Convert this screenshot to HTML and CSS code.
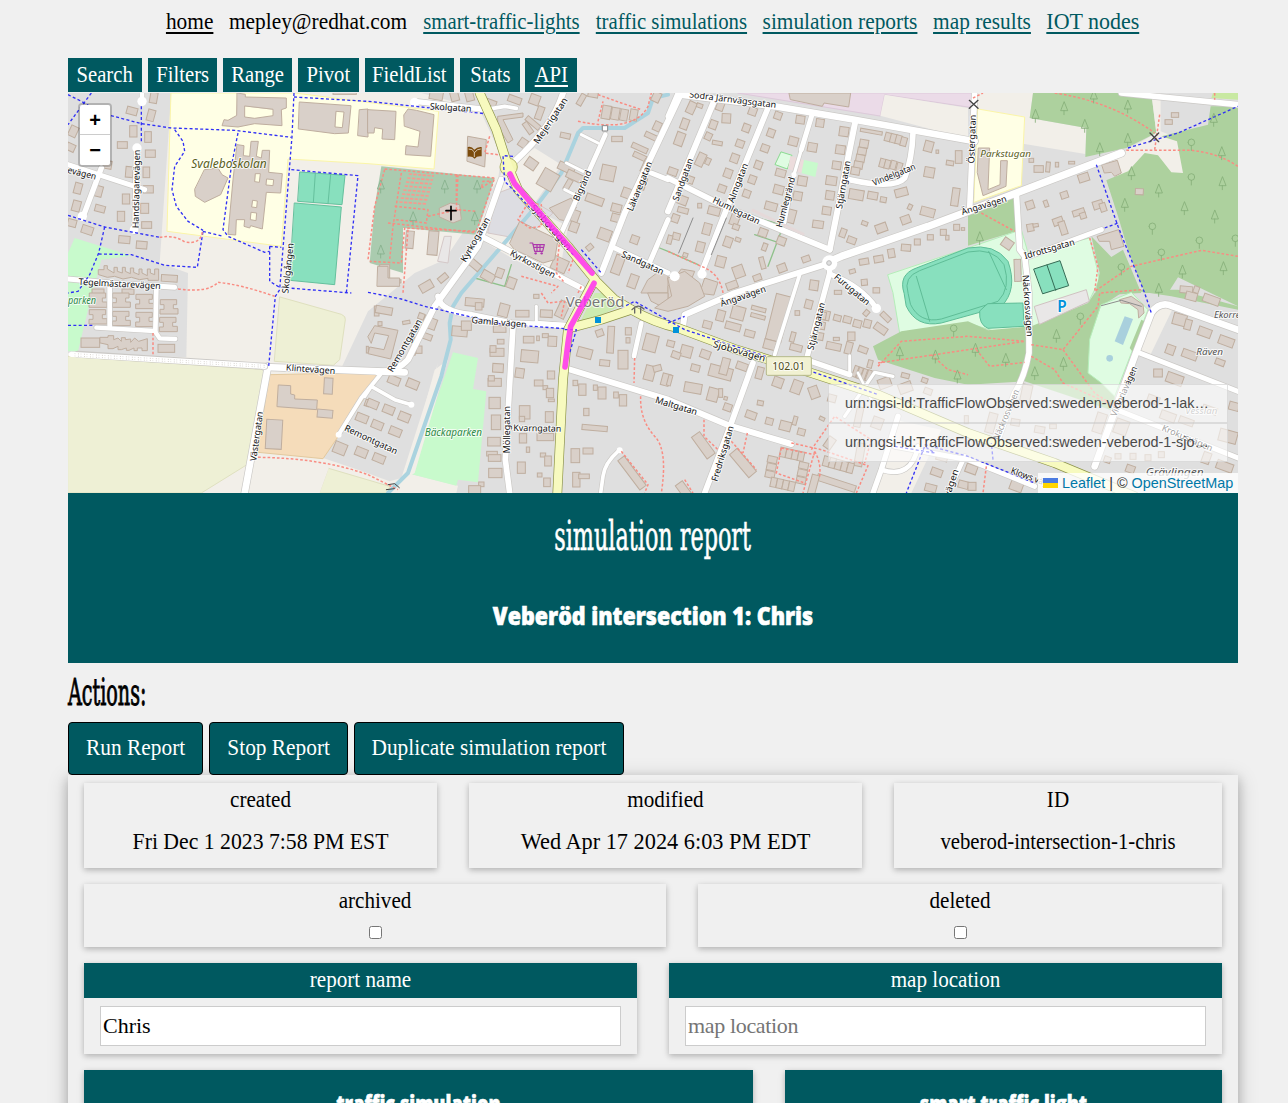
FILE: index.html
```html
<!DOCTYPE html>
<html lang="en">
<head>
<meta charset="utf-8">
<title>simulation report</title>
<link rel="stylesheet" href="styles.css">
</head>
<body>
<nav class="site-nav">
  <a class="home" href="#"><span>home</span></a>
  <b class="user"><span>mepley@redhat.com</span></b>
  <a class="lights" href="#"><span>smart-traffic-lights</span></a>
  <a class="sims" href="#"><span>traffic simulations</span></a>
  <a class="reports" href="#"><span>simulation reports</span></a>
  <a class="results" href="#"><span>map results</span></a>
  <a class="iot" href="#"><span>IOT nodes</span></a>
</nav>
<main class="page">
  <div class="tabs">
    <div class="t-search"><span>Search</span></div>
    <div class="t-filters"><span>Filters</span></div>
    <div class="t-range"><span>Range</span></div>
    <div class="t-pivot"><span>Pivot</span></div>
    <div class="t-fields"><span>FieldList</span></div>
    <div class="t-stats"><span>Stats</span></div>
    <div class="t-api"><span>API</span></div>
  </div>
  <section class="map">
    <svg id="map" class="map-canvas" viewBox="0 0 3510 1200" width="1170" height="400"></svg>
    <div class="zoom-control"><a>+</a><a>−</a></div>
    <div class="legend">
      <p>urn:ngsi-ld:TrafficFlowObserved:sweden-veberod-1-lakaregatan</p>
      <p>urn:ngsi-ld:TrafficFlowObserved:sweden-veberod-1-sjobovagen</p>
    </div>
    <div class="attribution">
      <svg width="15" height="10" viewBox="0 0 15 10"><path fill="#4c7be1" d="M0 0h15v5H0z"/><path fill="#ffd500" d="M0 5h15v5H0z"/></svg>
      <a href="#">Leaflet</a> | © <a href="#">OpenStreetMap</a>
    </div>
  </section>
  <header class="banner">
    <h1><span>simulation report</span></h1>
    <h2><span>Veberöd intersection 1: Chris</span></h2>
  </header>
  <h3 class="actions-title"><span>Actions:</span></h3>
  <div class="actions">
    <button class="b-run"><span>Run Report</span></button>
    <button class="b-stop"><span>Stop Report</span></button>
    <button class="b-dup"><span>Duplicate simulation report</span></button>
  </div>
  <section class="form">
    <div class="row row-dates">
      <div class="card info"><label>created</label><p>Fri Dec 1 2023 7:58 PM EST</p></div>
      <div class="card info modified"><label>modified</label><p>Wed Apr 17 2024 6:03 PM EDT</p></div>
      <div class="card info ident"><label>ID</label><p>veberod-intersection-1-chris</p></div>
    </div>
    <div class="row row-flags">
      <div class="card flag"><label>archived</label><input type="checkbox"></div>
      <div class="card flag"><label>deleted</label><input type="checkbox"></div>
    </div>
    <div class="row row-names">
      <div class="card field"><label>report name</label><input type="text" value="Chris"></div>
      <div class="card field"><label>map location</label><input type="text" placeholder="map location"></div>
    </div>
    <div class="row row-links">
      <div class="card link"><h4>traffic simulation</h4></div>
      <div class="card link"><h4>smart traffic light</h4></div>
    </div>
  </section>
</main>
<script src="map.js"></script>
</body>
</html>
```
FILE: styles.css
```css
* { box-sizing: border-box; }
html { height: 1103px; overflow: hidden; }
body {
  margin: 0; height: 1103px; overflow: hidden;
  background: #f0f0f0; color: #000;
  font: 24px/34px "Liberation Serif", serif;
}
p, h1, h2, h3, h4 { margin: 0; font-weight: 400; }

.site-nav {
  display: flex; justify-content: center; gap: 16px;
  margin: 0 50px 0 68px; padding-top: 4px; height: 58px;
}
.site-nav > * { display: flex; justify-content: center; height: 34px; font-weight: 400; white-space: nowrap; color: #005960; }
.site-nav span, .tabs span, .actions span {
  display: block; flex: none; transform: scaleX(.89); white-space: nowrap;
}
.site-nav a { text-decoration: underline; text-decoration-thickness: 2px; text-underline-offset: 3px; }
.site-nav .home { width: 47px; color: #000; }
.site-nav .user { width: 178px; color: #000; }
.site-nav .lights { width: 157px; }
.site-nav .sims { width: 151px; }
.site-nav .lights span, .site-nav .sims span { transform: scaleX(.865); }
.site-nav .reports { width: 154px; }
.site-nav .results { width: 97px; }
.site-nav .iot { width: 94px; }
.site-nav .iot span { transform: scaleX(.915); }

.page { width: 1170px; margin-left: 68px; }
.tabs { display: flex; gap: 6px; height: 35px; line-height: 32px; }
.tabs span { transform: scaleX(.86); }
.tabs div { display: flex; justify-content: center; height: 34px; background: #005960; color: #fff; }
.t-search { width: 74px; }
.t-filters, .t-range { width: 69px; }
.t-pivot { width: 61px; }
.t-fields { width: 89px; }
.t-stats { width: 60px; }
.t-api { width: 52px; margin-left: -1px; text-decoration: underline; text-decoration-thickness: 2px; text-underline-offset: 3px; }

.map { position: relative; height: 400px; overflow: hidden; background: #f2efe9; font-family: "Liberation Sans", Arial, sans-serif; }
.map-canvas { display: block; }
.map-canvas text { font-family: "Noto Sans", sans-serif; text-anchor: middle; fill: #111; stroke: #fff; stroke-width: 6px; stroke-opacity: .75; paint-order: stroke; stroke-linejoin: round; }
.map-canvas .place { font-style: italic; }
.zoom-control {
  position: absolute; left: 10px; top: 10px; width: 34px;
  border: 2px solid rgba(0,0,0,.2); border-radius: 4px; background-clip: padding-box;
}
.zoom-control a { display: block; height: 30px; background: #fff; text-align: center; font: bold 20px/31px "Liberation Sans", sans-serif; }
.zoom-control a:first-child { border-bottom: 1px solid #ccc; border-radius: 2px 2px 0 0; }
.zoom-control a:last-child { border-radius: 0 0 2px 2px; }
.legend { position: absolute; left: 760px; top: 291px; width: 400px; }
.legend p {
  height: 39px; padding: 0 16px; border: 1px solid rgba(200,200,200,.55);
  background: rgba(255,255,255,.58); color: #4a4a4a; font-size: 14.4px; line-height: 36px;
  white-space: nowrap; overflow: hidden; text-overflow: ellipsis;
}
.attribution {
  position: absolute; right: 0; bottom: 0; height: 20px; width: 200px; padding-left: 5px;
  background: rgba(255,255,255,.8); font-size: 14.4px; line-height: 20px; white-space: nowrap; color: #333;
}
.attribution a { color: #0078a8; text-decoration: none; }

.banner { height: 170px; padding-top: 20px; background: #005960; color: #fff; text-align: center; }
.banner span, .actions-title span { display: inline-block; white-space: nowrap; }
h1 { height: 80px; font: 41px/46px "DejaVu Serif Condensed", "DejaVu Serif", serif; -webkit-text-stroke: .6px #fff; }
h1 span { transform: scaleX(.605); }
h2 { font: 800 24px/46px "Open Sans", sans-serif; -webkit-text-stroke: .6px #fff; }
h2 span { transform: scaleX(.895); }
.actions-title { height: 59px; padding-top: 7px; font: 37px/46px "DejaVu Serif Condensed", "DejaVu Serif", serif; -webkit-text-stroke: .9px #000; }
.actions-title span { transform: scaleX(.575); transform-origin: left; }

.actions { display: flex; gap: 6px; }
.actions button {
  display: flex; justify-content: center; align-items: center; height: 53px; padding: 0 0 3px;
  border: 1px solid #000; border-radius: 4px; background: #005960; color: #fff;
  font: 24px/34px "Liberation Serif", serif;
}
.b-run { width: 135px; }
.b-stop { width: 139px; }
.b-dup { width: 270px; }

.form { height: 600px; padding: 8px 16px; box-shadow: 0 4px 10px rgba(0,0,0,.2), 0 4px 20px rgba(0,0,0,.19); }
.row { display: grid; gap: 32px; margin-bottom: 16px; }
.row-dates { grid-template-columns: 353px 393px 328px; }
.row-flags { grid-template-columns: 582px 524px; }
.row-names { grid-template-columns: 553px 553px; }
.row-links { grid-template-columns: 669px 437px; }
.card { box-shadow: 0 2px 5px rgba(0,0,0,.16), 0 2px 8px rgba(0,0,0,.12); text-align: center; }
.card label { display: block; height: 34px; line-height: 32px; transform: scaleX(.88); }
.info { height: 85px; }
.info p { margin-top: 7px; transform: scaleX(.905); white-space: nowrap; }
.modified p { transform: scaleX(.93); }
.ident p { transform: scaleX(.865); }
.flag { height: 63px; }
.flag input { display: block; width: 13px; height: 13px; margin: 8px auto 0; }
.field { height: 91px; background: linear-gradient(#005960 35px, #f0f0f0 35px); }
.field label { height: 35px; line-height: 33px; color: #fff; }
.field input {
  display: block; width: 521px; height: 40px; margin: 8px 16px; padding: 0 2px 1px; border: 1px solid #ccc;
  background: #fff; color: #000; font: 22px "Liberation Serif", serif;
}
.field input::placeholder { color: #757575; letter-spacing: -.35px; }
.link { height: 100px; background: #005960; color: #fff; }
h4 { padding-top: 16px; font: 800 23px/34px "Open Sans", sans-serif; transform: scaleX(.79); -webkit-text-stroke: .6px #fff; }
```
FILE: map.js
```js
// Town map, drawn at three units per pixel. Tiles are 900 x 600 units.
const out = [];
const path = (d, fill, stroke = 'none', w = 0, extra = '') =>
  out.push(`<path d="${d}" fill="${fill}" stroke="${stroke}" stroke-width="${w}" stroke-linejoin="round" ${extra.includes('dasharray') ? '' : 'stroke-linecap="round"'} ${extra}/>`);
const tile = (x, y, draw) => { out.push(`<g transform="translate(${x} ${y})">`); draw(); out.push('</g>'); };

// Land use
const land = [
  ['#dfdfdf', 'M0,0H310L275,510 360,540 355,793 0,780z'],
  ['#dfdfdf', 'M1060,0H3510V1200H1165L1170,1178 1028,1143 1110,810 1000,1155 965,1165 870,1130 765,1095 900,900V845L820,825 900,655 1040,540 1130,500 1290,260 1300,190 1240,60 1170,30z'],
  ['#f2efe9', 'M1300,240L1400,165 1480,215 1390,345 1500,400 1470,560 1340,500 1220,430z'],
  ['#ffffe5', 'M310,0H680L1112,55 1098,228 900,212 660,198 640,460 298,415z', '#fbf5a8'],
  ['#c8facc', 'M20,435L190,488 100,500 60,650 30,775H0V480z'],
  ['#eef0d5', 'M0,790L590,830 570,1080 545,1110 400,1200H0z', '#dfe0bf'],
  ['#eef0d5', 'M636,612L820,664Q834,670 832,680L815,800 796,817 620,805z', '#dfe0bf'],
  ['#eef0d5', 'M782,1126L965,1180 960,1200H755z', '#dfe0bf'],
  ['#f2efe9', 'M430,1200L545,1110 575,1080 765,1097 782,1126 755,1200z'],
  ['#f5dcba', 'M605,845L940,838 900,900 765,1097 570,1078z', '#e3c99e'],
  ['#aacbaf', 'M940,220L1280,255 1225,425 1005,405V540L905,510 920,340z'],
  ['#88e0be', 'M696,237L831,247 822,335 690,325z', '#65c09d'],
  ['none', 'M742,240L736,329M788,244L780,332', '#65c09d'],
  ['#88e0be', 'M680,330L820,342 800,575 665,562z', '#65c09d'],
  ['#c8facc', 'M1155,778L1230,795 1215,888 1255,895 1230,1168 1170,1160 1165,1178 1028,1143z'],
  ['#cdebb0', 'M1530,700L1580,600 1620,600 1655,640z'],
  ['#ebdbe8', 'M2010,0H2720V45L2450,5 2437,68z', '#ddc9da'],
  ['#d9d0c9', 'M2164,0H2348L2342,42 2268,30 2263,40 2168,20z', '#bfae9f'],
  ['#f2efe9', 'M2450,5L2700,45V138L2437,68z'],
  ['#f2efe9', 'M2720,0H2895L2885,75 3055,105 3052,183 2865,152 2725,50z'],
  ['#ffffe5', 'M2730,48L2870,72 2860,278 2718,328z', '#fbf5a8'],
  ['#add19e', 'M2895,0H3250L3265,120 3175,165 3052,192 3055,105 2885,75z'],
  ['#f2efe9', 'M3250,0H3278V115L3330,135 3350,240 3270,260 3200,300 3140,250 3100,215 3265,120z'],
  ['#add19e', 'M3115,262L3180,235 3230,180 3270,187 3310,238 3345,240 3327,145 3280,130 3420,95 3428,40H3510V640L3330,553 3300,600 3230,600 3180,470 3150,370z'],
  ['#c8e9a2', 'M3435,0H3510V20L3430,15z'],
  ['#add19e', 'M2700,360L2840,315 2862,410 2700,458z'],
  ['#dffce2', 'M2460,545L2700,465 2860,410 2880,480 3065,435 3095,560 3065,620 2910,700 2780,715 2700,690 2495,720 2475,600z', '#b5eeb9'],
  ['#add19e', 'M3070,430L3130,492 3165,470 3220,600 3080,608 3095,540z'],
  ['#add19e', 'M2415,760L2500,715 2700,685 2760,712 2890,700 3060,630 3080,600H3160L3100,640 3065,740 3060,840 3140,890V955L2870,865 2700,875 2600,855 2430,800z'],
  ['#add19e', 'M3180,590H3330L3510,640V650L3310,610z'],
  ['#dffce2', 'M3100,635L3190,598 3240,650 3140,910 3100,870 3060,840 3065,740z', '#b5eeb9'],
  ['#add19e', 'M3185,765L3220,680 3240,690 3195,778z'],
  ['#f2efe9', 'M3260,640L3315,645 3240,800 3210,780z'],
  ['#f2efe9', 'M2410,1200L2480,980 2620,1010 2530,1200z'],
  ['#88e0be', 'M2508,600Q2490,545 2545,525L2700,465Q2780,450 2820,505 2850,590 2800,640L2620,690Q2545,705 2515,640z', '#5fbd97'],
  ['none', 'M2520,600Q2505,552 2555,533L2700,477Q2775,462 2808,515 2830,585 2790,625L2620,678Q2555,692 2528,635zM2545,550L2585,685M2762,475L2815,590', '#5fbd97'],
  ['#88e0be', 'M2760,632L2865,630 2868,700 2760,706Q2732,695 2735,655z', '#5fbd97'],
  ['#88e0be', 'M2898,528L2976,503 3002,578 2925,602z', '#356b55'],
  ['none', 'M2937,516L2963,592', '#356b55'],
  ['#dffce2', 'M2140,177L2172,187 2158,228 2122,215z', '#8bdc91'],
  ['#c8facc', 'M2205,200L2250,210 2242,252 2200,240z'],
  ['#ecdcdc', 'M2167,188L2208,202 2200,240 2160,228z'],
  ['#e9e7e7', 'M2900,640L3055,590 3064,625 2915,694z', '#d1c2c2'],
  ['#a9d0dd', 'M3170,670L3195,678 3165,756 3140,745z'],
  ['#dddde2', 'M1290,300L1330,285 1455,360 1370,440 1260,420z', '#d4c8c8'],
  ['#e9e7e7', 'M1130,430L1150,430 1140,510 1110,505z', '#d4c8c8'],
];
land.forEach(([f, d, s]) => path(d, f, s || 'none', s ? 3 : 0));
out.push('<circle cx="3125" cy="796" r="10" fill="#a9d0dd"/>');
path('M1100,830L1140,800 1040,1140 1010,1160z', '#f2efe9');
path('M2070,375L2160,400M2060,425L2150,455M2160,360L2100,520M1800,475L1890,515M1220,555L1310,580 1330,515M1775,465L1800,475', 'none', '#8fc18b', 4);

// Stream
path('M1800,5L1755,15 1740,60 1670,105 1545,105 1530,120 1480,240 1400,345 1180,600 1155,640 1145,690 1148,740 1120,850 1020,1140 960,1200', 'none', '#aad3df', 12);

// Buildings: [centre x, centre y, width, height, rotation]
const B = '#d9d0c9', BS = '#bfae9f';
const blocks = (x, y, list, shapes = '') => tile(x, y, () => {
  list.forEach(([cx, cy, w, h, a]) => out.push(`<rect x="${cx - w / 2}" y="${cy - h / 2}" width="${w}" height="${h}" transform="rotate(${a || 0} ${cx} ${cy})" fill="${B}" stroke="${BS}" stroke-width="3"/>`));
  if (shapes) path(shapes, B, BS, 3, 'fill-rule="evenodd"');
});
blocks(0, 0, [[257,14,22,32,10],[192,54,32,22,15],[249,67,22,34,15],[16,115,24,32,25],[8,163,26,22,25],[196,115,22,34],[240,132,20,32],[163,156,30,20],[247,182,30,22],[118,215,26,24,10],[30,286,22,32,15],[92,295,22,32,15],[184,237,22,32,5],[235,238,20,32],[241,289,30,22],[174,318,22,30],[230,346,24,30],[25,339,24,32,15],[96,347,30,20,15],[159,370,22,30],[236,396,30,20],[12,390,26,22,15],[58,411,34,24,18],[169,440,34,22,5],[221,456,32,22,5],[304,556,48,20,4],[180,596,36,16],[90,596,36,16],[830,0,70,8]],
  'M92,530H108V518H118V528L138,540V523H148V535L163,540V523H172V535L187,542V525H197V538L213,545V528H222V540L238,548V528H247V540L260,545V528H272V562H240V556L215,560 190,553 165,558 140,550 118,553 92,545z' +
  'M508,0L532,4V12L655,15V45L640,50 642,98 560,92 510,102 462,98 468,80 480,82 505,68zM530,40V72L560,76 615,68V50z' +
  'M695,27L849,38 841,120 800,122 692,108zM805,55L828,57 823,104 802,102zM875,50L900,48V132L870,128z' +
  'M410,230L450,225 462,245 480,255 458,305 410,328 382,310 380,290z' +
  'M508,155L528,158 526,188 545,190 549,145H571L565,190 580,195 583,172H605L602,238 643,242 638,300 595,298 583,408 548,398 545,405 528,400 530,380 505,380 503,426 480,424 495,260zM563,242L577,242 574,268 561,266zM597,258L617,260 615,278 595,276zM555,322L568,324 566,344 552,342zM550,358L566,360 564,383 548,380z');
blocks(900, 0, [[205,5,40,30,10],[260,10,24,28,-15],[305,10,24,28,-15],[370,30,30,18,20],[440,20,40,20,20],[500,20,30,30,20],[515,60,20,40,20],[465,150,24,26,35],[495,90,50,16,40],[480,105,16,38,-35],[592,128,30,16,12],[640,20,16,36,30],[675,5,30,16,10],[715,58,26,40,10],[742,62,24,36,10],[768,66,22,34,10],[797,66,22,34,10],[868,100,22,28,25],[850,130,40,16,25],[865,12,24,30,25],[815,165,50,16,25],[815,190,40,16,25],[835,220,24,40,25],[747,138,32,16],[720,240,42,46,12],[595,225,50,24,25],[620,250,50,24,25],[600,275,16,34,30],[680,320,54,24,20],[745,345,30,24,15],[745,375,30,24,15],[622,370,22,36,20],[618,402,26,30,20],[710,425,38,34,20],[750,515,28,58,20],[800,440,24,24,20],[795,565,26,40,20],[665,463,20,16,-40],[820,270,28,36,20],[775,300,26,30,20],[50,540,30,50],[95,565,8,10],[195,450,30,72,5],[125,440,24,52,5],[320,515,40,22,40],[360,550,40,26,30],[395,540,22,28,20],[430,570,26,32,20],[225,555,30,18,-40],[175,580,40,26,-30],[575,515,46,40,25],[540,260,50,56,30],[490,212,34,30,35]],
  'M0,50L84,55 80,140 42,138 44,108 20,104 18,120 0,120zM108,65L120,48 145,52 198,65 188,190 112,185 114,158 150,162 156,115 110,100z' +
  'M300,130L355,140 350,222 298,205zM215,345L248,330 275,335 280,380 255,390 215,372z' +
  'M425,450L455,385 570,440 560,500 525,510 440,470zM545,345L610,315 625,345 605,360 600,385 575,380z' +
  'M390,70L465,60 465,72 405,80 435,140 420,150 390,100zM30,520H60V555H95V580H28zM840,560L880,530 900,540V600H820z');
blocks(1800, 0, [[70,44,24,36,25],[50,93,22,32,20],[35,138,26,40,20],[95,38,18,12,20],[157,38,22,30,20],[175,76,26,28,3],[136,95,22,26,20],[121,130,20,22,25],[148,150,30,12,10],[98,200,24,40,25],[120,205,14,20,25],[65,260,24,22,20],[14,236,28,22,20],[254,55,24,24,20],[235,105,22,24,20],[216,152,24,22,20],[200,196,24,26,20],[180,241,24,26,20],[162,287,24,22,20],[330,68,22,22,20],[309,120,22,24,20],[291,166,24,22,20],[271,216,22,24,20],[253,260,22,24,20],[236,302,22,22,20],[397,80,26,24,8],[456,90,24,24,8],[376,145,28,26,15],[433,163,28,26,10],[403,264,28,28,10],[389,309,26,26,10],[338,240,30,22,15],[332,290,30,26,15],[309,340,36,24,15],[370,370,24,40,15],[528,116,28,28,8],[517,170,28,26,8],[506,217,26,24,8],[490,263,32,26,8],[486,307,26,26,8],[476,353,26,24,8],[450,394,32,22,8],[610,116,66,10,10],[660,132,18,26,15],[676,136,18,26,15],[692,140,18,26,15],[707,146,18,26,15],[588,152,26,24,10],[582,175,26,22,10],[577,196,26,22,10],[571,216,26,22,10],[562,234,26,22,10],[643,210,16,26,15],[658,214,16,26,15],[676,216,16,26,15],[694,222,16,26,15],[565,305,44,30,10],[614,308,30,22,10],[646,320,18,16,10],[700,298,38,24,-15],[782,160,26,32,15],[808,176,8,10],[872,192,20,38],[846,210,22,14,8],[784,238,30,30,10],[862,312,22,54,8],[726,342,12,16,25],[779,357,42,26,15],[713,380,28,24,-20],[590,391,18,12,20],[640,405,34,26,-20],[525,420,18,26,20],[551,442,26,20,20],[44,322,28,26,20],[45,352,32,16,15],[22,376,22,24,20],[95,338,12,14],[138,354,36,24,15],[117,408,24,34,15],[25,430,22,20,15],[97,462,24,30,15],[5,440,14,26,15],[200,380,26,34,20],[204,402,20,16,20],[285,419,26,24,20],[340,444,26,24,20],[180,447,24,30,20],[210,440,16,12,20],[290,462,14,22,20],[52,486,14,12,20],[158,506,28,32,15],[283,510,14,36,-15],[212,536,32,36,-20],[342,525,26,24,-20],[268,554,24,18,-20],[414,498,24,18,-20],[438,577,26,30,8],[192,577,34,22,-20],[553,535,18,12,-15],[589,568,18,18,-5],[588,506,28,18,-10],[632,498,28,20,-10],[670,481,20,26,-10],[714,464,28,20,5],[748,447,18,18],[787,433,18,16],[826,418,18,18],[866,403,18,18],[885,408,10,8],[838,434,10,14],[510,598,22,12],[625,592,20,16]],
  'M0,640V580L40,528 80,535 50,610zM95,600L110,555 150,568 138,605z');
blocks(2700, 0, [[190,202,14,12],[212,228,28,20],[240,222,12,30,5],[267,215,10,14],[311,209,18,8],[621,66,22,14],[602,87,22,14],[347,254,32,24,-18],[289,306,22,20,-18],[234,332,12,20,-20],[186,336,24,24,-18],[187,404,20,22,-10],[203,397,16,10,-10],[332,358,36,18,-18],[345,368,18,18,-18],[270,385,30,22,-20],[285,405,20,40,-18],[390,335,30,24,-18],[405,343,18,26,-18],[118,452,32,28,35],[149,532,20,66,-2],[514,296,24,18,3],[655,590,38,20,5],[685,590,16,20,20]],
  'M32,165H65L60,290 96,275 98,203H118L114,280 45,308 28,240zM402,215L448,202 460,240 440,250 430,238 410,240zM388,430L452,410 468,460 430,470 425,445 395,445z');
const rowHouse = (x, y) => `M${x},${y}h48v15h-10v12h14v16h-54v-14h12v-14h-10z`;
blocks(0, 600, [[67,149,56,28],[295,166,50,24],[781,279,26,48,3],[771,362,46,24,5],[618,424,48,88,3],[816,466,38,34,22],[882,375,36,24,22],[880,478,36,26,22],[898,330,14,20,20],[898,170,6,20]],
  rowHouse(65,0)+rowHouse(65,50)+rowHouse(135,0)+rowHouse(135,55)+rowHouse(205,4)+rowHouse(205,58)+rowHouse(278,20)+rowHouse(276,73)+
  'M97,133H120V128H137V140L150,135 160,145V134H172V140L188,138V148L200,135 212,145 238,137V173H222V165H208V173H198V165L183,172H175V165L160,170H150V160L135,167H120V155L97,150zM632,276L668,278V303L680,306V318L748,321 746,350 628,341z');
blocks(900, 600, [[26,54,14,30],[48,52,50,22,10],[36,92,12,12],[185,90,40,32,20],[177,131,30,18,20],[160,70,18,18,20],[115,88,22,10,-10],[140,160,20,50,20],[153,170,18,22],[320,28,56,24,5],[332,40,20,22],[407,52,30,38,15],[463,62,40,20],[535,62,36,22,3],[583,50,30,50,25],[275,115,46,30,5],[295,98,30,28],[395,108,38,20],[398,146,20,14],[387,178,42,24],[375,168,18,20],[482,140,32,20],[510,136,8,14],[532,128,18,12],[553,145,26,30,3],[455,240,26,28,8],[485,190,52,36,5],[390,225,32,26,3],[380,268,40,24],[370,256,18,16],[512,270,26,18],[549,246,22,24],[532,284,14,12],[546,300,22,28],[550,322,18,8],[380,330,34,34],[470,358,32,40],[462,378,16,16],[384,388,28,44],[544,372,24,32],[378,446,38,26],[372,482,32,14],[380,495,38,20],[465,436,22,28],[532,432,50,22],[480,470,10,16],[525,486,16,12],[540,504,20,30],[460,524,24,34],[515,546,14,12],[537,568,20,26],[382,540,40,28],[340,574,16,14],[320,590,36,24],[650,180,44,30,15],[695,120,22,20,-20],[728,140,20,80,3],[781,115,18,22],[780,142,12,16],[710,210,30,18,6],[765,200,30,56],[848,150,40,50,15],[845,240,30,44,15],[868,226,24,18,-15],[893,260,24,36,15],[643,290,22,34],[622,270,14,16],[702,300,24,36],[682,284,12,16],[765,322,22,34],[744,306,14,18],[655,357,16,22],[680,405,76,16,5],[622,488,26,42],[660,474,30,18],[625,560,22,44],[648,550,32,14],[78,262,36,24,22],[134,273,36,26,22],[14,333,34,24,22],[62,350,34,24,22],[109,372,34,26,22],[28,396,34,24,22],[82,416,36,24,22],[33,496,36,24,22],[792,540,24,110,-37],[505,10,16,12]],
  'M0,130L20,98 90,112 68,198 0,182 5,162 48,170 62,128 20,120 10,150zM840,0H900V50L850,25z');
blocks(1800, 600, [[158,68,24,32,15],[118,95,26,22,15],[210,60,40,40,15],[195,100,46,22,15],[245,122,30,20,15],[272,48,44,12,15],[270,70,44,12,15],[332,75,48,140,14],[305,155,36,28,15],[388,60,14,14],[422,34,22,26,15],[374,132,14,30,15],[384,164,36,20,15],[475,68,20,28,12],[508,75,22,18,15],[538,80,24,20,15],[568,92,24,22,15],[598,92,22,24,15],[595,60,18,14,-50],[653,72,34,16,45],[638,107,40,22,35],[550,130,22,26],[542,165,20,36,15],[497,160,44,22,12],[505,138,18,10],[585,170,28,18,20],[463,68,22,22,10],[460,98,22,22,10],[455,130,22,22,10],[606,213,14,24,15],[562,235,12,34,20],[575,240,12,34,20],[588,244,12,34,20],[602,248,12,34,20],[650,270,38,30,-20],[712,248,24,14,15],[712,284,40,30,-20],[770,262,18,14,20],[780,295,24,18,20],[8,152,22,18,15],[55,175,34,34,15],[112,184,30,24,20],[24,186,26,20,20],[82,225,26,20,15],[5,262,12,32,15],[158,238,70,36,15],[170,220,24,50,15],[222,220,34,22,20],[275,240,20,36,15],[330,268,30,30,20],[386,282,30,40,20],[438,298,28,36,-20],[492,316,24,22,15],[75,285,52,30,10],[135,305,32,40,15],[179,343,24,22,20],[173,316,10,10,15],[158,300,12,26],[249,366,32,22,20],[277,330,18,14,10],[304,385,22,20,15],[352,399,34,28,15],[381,383,12,26,15],[400,417,22,20,15],[462,377,16,10,25],[106,457,30,80,-36],[225,510,30,90,-40],[50,595,26,60,-36],[572,372,20,60,12],[628,390,32,34,20],[485,450,24,36,35],[575,485,24,70,10],[475,505,18,30,15],[493,510,18,30,15],[511,515,18,30,15],[529,520,18,30,15],[547,525,18,30,15],[505,570,120,20,18],[435,580,22,70,15],[313,500,28,20,12],[310,522,28,20,12],[306,544,28,20,12],[407,518,28,20,12],[403,540,28,20,12],[399,562,28,20,12],[345,478,18,28,12],[363,482,18,28,12],[381,486,18,28,12],[399,490,18,28,12],[317,568,18,28,12],[335,572,18,28,12],[353,576,18,28,12],[371,580,18,28,12],[822,492,34,22,15],[806,538,34,22,20],[788,585,34,22,15],[886,575,30,22,15],[895,380,12,24]],
  'M0,-45L50,-65 95,-30 110,10 60,40 0,55 -40,45 10,10z');
blocks(2700, 600, [[670,10,34,24,15],[730,20,50,24,20],[635,80,40,34,15],[660,95,20,30,15],[710,118,40,26,20],[775,145,46,26,20],[607,170,26,28,20],[665,185,46,24,20],[756,208,28,18,20],[570,240,26,24],[620,258,50,30,20],[556,320,36,24,20],[600,370,46,26,20],[655,385,44,20,20],[725,350,44,20,20],[798,340,30,24,15],[780,430,54,36,15],[175,300,30,50,12],[70,390,26,60,15],[142,388,26,20,10],[215,410,30,20,10],[395,390,30,60,18],[460,402,40,44,20],[418,500,20,18,20],[450,490,18,16],[495,490,18,18],[540,494,18,18],[580,485,18,18],[487,528,26,22,20],[715,495,24,34,20],[770,520,50,26,20],[145,580,38,28,20],[10,528,34,26,20],[12,580,24,24],[255,400,20,14]],
  'M455,20L490,10 525,35 528,60 512,75 510,50 485,32 460,30z');

// Roads: [path, width]
const roads = [
  ['M0,215L230,290', 15], ['M100,225L45,372', 16], ['M205,165L200,415', 15], ['M222,0V28', 14],
  ['M0,558L130,570 320,583', 15], ['M125,580V700', 14], ['M265,590L262,715', 14], ['M85,704L260,714 275,736 322,738', 13],
  ['M590,822L1010,838', 20], ['M600,820L530,1200', 20], ['M930,838Q990,835 1020,800L1100,640 1230,460 1300,260', 18],
  ['M890,910L910,880 980,920 1030,935', 11], ['M945,835L880,915 812,1025', 12],
  ['M1040,25L1240,48', 16], ['M1240,52L1310,40 1345,46', 11], ['M1485,0Q1455,100 1340,205', 18],
  ['M1110,610Q1115,655 1210,665L1330,690 1500,698', 17], ['M1500,698L1405,690', 14], ['M1405,640V700', 9], ['M1335,700L1312,1100 1325,1200', 17],
  ['M1330,1005H1380', 10], ['M1240,430L1540,585', 17], ['M1612,125L1480,420', 14], ['M1540,125L1590,150M1495,210L1545,235M1490,290L1520,305', 9],
  ['M1840,0L1670,360 1600,540', 18], ['M1640,465L1800,540', 15], ['M1750,240L1800,260', 15], ['M1830,0L1800,70M1800,380L1740,520', 15],
  ['M1800,255L1980,345 2285,470', 17], ['M1940,20L1800,355', 18], ['M2100,45L1975,350 1900,540', 17], ['M2232,65L2200,170', 15],
  ['M2200,170L2178,245 2150,390', 10], ['M1840,5L2120,40 2360,80 2720,145', 20],
  ['M2362,85L2285,470', 18], ['M2535,120Q2532,200 2510,255 2480,290 2345,260', 17], ['M2285,505L2320,490 2580,400 2700,355 3160,180', 22],
  ['M2285,510L2000,600 1850,665 1845,700', 18], ['M2285,500V540L2215,800 2345,845', 16], ['M2345,788V845', 9], ['M2290,545Q2380,580 2425,645', 15],
  ['M2195,545L2120,785', 11], ['M2720,0L2705,350', 17], ['M3160,0L3510,35', 17],
  ['M2845,300L2855,470 2870,490 2883,600V780Q2870,850 2840,900L2790,1040', 17], ['M2870,495L3100,410', 15],
  ['M1500,828L1800,920 1985,998 2170,1053', 18], ['M2055,810L1990,990 1910,1200', 17], ['M1720,690L1698,790', 14],
  ['M1650,1075Q1610,1110 1605,1150L1598,1200', 11], ['M2490,970L2440,1130 2415,1200', 16], ['M2440,1130Q2530,1160 2550,1060', 14],
  ['M2410,920L2370,840', 8], ['M2475,850L2420,838 2330,970', 10],
  ['M3510,710L3300,635Q3270,630 3250,660L3200,790 3080,1120', 20], ['M3215,780L3510,895', 15], ['M3145,950L3510,1095', 15],
  ['M2480,1060L2700,1100 2900,1180', 15], ['M2690,1090L2640,1200', 14],
];
roads.forEach(([d, w]) => path(d, 'none', '#cbc9c6', w + 4));
roads.forEach(([d, w]) => path(d, 'none', '#fff', w));
[[222,25,14],[207,165,14],[43,370,14],[198,410,13],[812,1025,9],[1040,28,14],[2285,510,23],[1902,543,14],[1820,550,15],[2425,646,14],[1030,935,9],[1655,1072,9],[2178,245,8]].forEach(([x, y, r]) =>
  out.push(`<circle cx="${x}" cy="${y}" r="${r}" fill="#fff"/>`));
out.push('<circle cx="2283" cy="510" r="7" fill="#dfdfdf" stroke="#bbb" stroke-width="3"/>');
path('M30,784L590,820', 'none', '#cbc9c6', 21);
path('M10,784L590,820', 'none', '#fff', 16);
path('M20,782L590,817M20,789L590,823', 'none', '#cfcac4', 2.5, 'stroke-dasharray="2 8 3 5"');
const main = ['M1235,0L1285,110 1320,220 1350,290 1500,460 1585,565 1640,620 1690,650Q1760,690 1830,705L2000,768 2230,840 2430,905 2700,1020 2960,1110 3200,1210', 'M1580,560L1500,710 1485,860 1468,1200', 'M1505,705L1600,680 1690,650'];
main.forEach(d => path(d, 'none', '#8c9348', 29));
out.push('<circle cx="1322" cy="222" r="26" fill="#f4f7b4" stroke="#aeb46a" stroke-width="3"/>');
main.forEach(d => path(d, 'none', '#f7fabf', 25));

// Foot and cycle paths
const blue = ['M0,5L40,25 100,60 220,92 310,105 500,112 670,133','M70,0L0,95','M220,40V150','M678,0L672,130 660,280 635,590 622,610 602,820','M678,12L900,25 1250,62','M320,110L345,145 350,175 320,220 312,290 325,340 360,385 405,412','M510,120L490,220 465,410 480,430 590,478 605,475','M0,367L110,402 275,433M405,415L465,430','M110,402L92,480 65,545 30,595 0,600','M92,483L190,485 290,517 388,523 405,415','M605,460L640,463M605,460V565L635,583 850,600','M670,230L870,248 835,600','M0,697H80','M900,598L1000,618 1070,640 1300,693 1490,707','M1335,190L1305,188 1310,265 1340,295 1520,490M1540,470L1600,540','M1490,710L1525,710 1505,780','M1660,645L1700,625 1850,710 2200,825 2430,905','M1800,690L1850,670','M3180,165L3330,120 3510,40','M3085,215L3150,400 3230,600 3250,660','M3110,405L3150,390','M2480,1060L2600,1080 2570,1060 2515,1200','M2570,1055L2700,1090 2900,1170','M2775,1100L2770,1050'];
blue.forEach(d => path(d, 'none', '#3030f5', 4, 'stroke-dasharray="9 7"'));
const red = ['M275,433Q320,425 350,447 400,455 403,415','M330,588Q420,600 450,568 520,575 620,610','M255,720V790','M570,1093Q760,1095 900,1145','M900,1145L990,1190','M1590,5L1660,30 1720,50','M1530,85Q1700,120 1740,40L1750,0M1590,85L1605,25','M1265,130L1250,180 1290,185','M950,228L1280,255 1225,415 1010,405 1000,510 905,505','M1165,245V330M950,230L920,340 900,500M1080,370L1170,350M1170,245L1165,350 1225,355','M1000,240L975,400 965,500M980,340L1080,350 1075,390 980,380','M960,390L1230,420','M1240,285L1270,265 1245,265z','M1020,410L1005,600','M1380,330L1350,380 1385,405 1420,400 1420,335 1385,330','M1360,550L1470,580 1450,600','M1475,440L1465,540 1490,570','M1515,500L1500,540','M1800,475L1900,520Q1955,540 1965,600','M1700,795L1698,870','M1718,910Q1715,980 1760,1030 1800,1070 1780,1200','M1660,1075L1740,1175 1730,1200','M2170,1050L2260,1070 2400,1118 2365,1200','M2230,1070L2300,970 2410,1040 2390,1110','M2240,1075Q2260,1110 2255,1150M2240,1075L2205,1200','M2140,1065L2125,1140 2210,1170M2140,1065L2240,1085','M1908,980V1030L1950,1070M1990,1045L2065,1130M2038,1020L2025,1080','M1850,1160L1875,1200','M2960,0Q3130,25 3260,120M3275,65L3260,170M3175,172H3370Q3450,180 3510,220','M2740,360L2840,415','M3065,435L3090,520 3080,595 3190,520 3400,472 3510,490','M2430,820L2500,745 2700,730 2870,745M2430,810L2600,785 2700,770 2870,745','M2590,785L2640,830 2700,845','M2725,770L2765,820 2870,808','M2890,755L2985,770 3090,640 3095,600 3220,590M2985,770L3080,900 3140,940','M2890,790L2960,830 2985,870 3120,930','M2755,1120L2745,1200','M3440,0V20','M1530,600L1540,580M1420,600L1440,630 1490,625 1480,670','M2715,15L2745,0'];
red.forEach(d => path(d, 'none', '#f98c82', 4.5, 'stroke-dasharray="8 6"'));
for (let r = 0; r < 8; r++) path(`M${1022 - r * 4},${243 + r * 12}L${1098 - r * 3},${249 + r * 12}`, 'none', '#f9988e', 5, 'stroke-dasharray="10 4"');
path('M1975,375L1930,485M1875,375L1832,480M3100,638L3160,622 3220,640', 'none', '#8d8d8d', 3);
path('M2055,352L2205,423', 'none', '#e5d9d9', 9);

// Trees
const fir = [[2988,45],[3077,10],[3179,40],[3179,140],[3095,168],[2902,68],[3050,98],[3437,80],[3461,180],[3463,270],[3349,345],[3440,370],[3272,292],[3170,335],[2735,435],[3466,525],[3343,535],[2965,728],[2813,800],[2900,840],[2986,812],[2722,770],[2495,780],[2668,850],[2602,790],[3190,240],[938,280],[1130,280],[1227,280],[938,475],[1035,375],[1220,375],[3272,590]];
fir.forEach(([x, y]) => path(`M${x},${y - 18}l-10,26h20zM${x},${y + 8}v12`, 'none', x < 1300 ? '#86b08b' : '#85af78', 2.5));
[[3370,148],[3370,252],[3253,400],[3394,442],[3280,478],[3160,522],[3502,436],[3037,670],[2657,706]].forEach(([x, y]) =>
  path(`M${x - 10},${y}a10,10 0 1 0 20,0a10,10 0 1 0 -20,0M${x},${y + 10}v14`, 'none', '#85af78', 2.5));

// Points of interest
path('M1199,162q12,-3 20,8q10,-10 22,-8v28q-14,-2 -21,7q-8,-9 -21,-6z', '#7b4b0c');
path('M1203,168q10,-1 16,9v14M1237,168q-10,0 -16,9', 'none', '#fff', 2);
path('M1149,340V380M1134,353H1164', 'none', '#000', 5);
path('M1386,450h8l6,25h24l5,-20h-34M1400,463h26M1407,456v18M1416,456v18', 'none', '#ac39ac', 3.5);
out.push('<circle cx="1403" cy="481" r="3.5" fill="#ac39ac"/><circle cx="1421" cy="481" r="3.5" fill="#ac39ac"/>');
path('M2704,22L2730,46M2730,22L2704,46M3246,120L3272,146M3272,120L3246,146', 'none', '#444', 4);
path('M1692,650Q1710,630 1728,648M1700,645V660M1718,645V660', 'none', '#666', 4);
path('M1604,98h15v16h-15z', '#fff', '#888', 3);
path('M960,1175l20,-3 14,12M955,1190l24,-3', 'none', '#444', 3);

// Labels: [text, centre x, centre y, length, rotation, size, class, colour]
const labels = [
  ['evägen',42,241,88,14],['Handslagarevägen',205,288,236,-89],['Svaleboskolan',483,214,226,0,36,'place','#59601c'],['Skolgången',660,526,152,-84],['Tegelmästarevägen',155,573,246,3],
  ['parken',42,622,84,0,30,'place','#2d8a46'],['Klintevägen',728,829,148,4],['Västergatan',566,1030,150,-82],['Remontgatan',909,1040,172,25],
  ['Skolgatan',1148,44,125,3],['Mejerigatan',1448,83,160,-56],['Bigränd',1543,278,98,-66],['Läkaregatan',1715,280,158,-68],['Kyrkogatan',1222,440,150,-60],['Kyrkostigen',1394,513,150,28],['Sandgatan',1724,510,136,24],['Sjöbovägen',1449,403,172,49],
  ['Södra Järnvägsgatan',1994,20,262,7],['Sandgatan',1845,260,134,-70],['Almgatan',2010,270,124,-69],['Humlegatan',2005,353,154,26],['Humlegränd',2153,328,155,-75],['Stjärngatan',2326,275,146,-80],['Vindelgatan',2478,245,136,-22],['Östergatan',2712,138,146,-88],['Parkstugan',2813,183,152,0,28,'place','#59601c'],['Ängavägen',2748,337,140,-17],['Idrottsgatan',2944,468,156,-16],['Näckrosvägen',2879,638,186,86],['Furugatan',2352,590,130,40],
  ['Ängavägen',2025,610,142,-19],['Stjärngatan',2245,700,146,-76],['Remontgatan',1010,758,178,-60],['Gamla vägen',1293,688,166,5],['Möllegatan',1318,1010,142,-90],['Kvarngatan',1408,1006,144,1],['Bäckaparken',1156,1020,172,0,30,'place','#2d8a46'],['Sjöbovägen',2014,775,162,16],['Maltgatan',1825,939,130,17],['Fredriksgatan',1964,1082,172,-73],
  ['Ekorren',3486,667,96,0,28,'place','#555'],['Räven',3425,777,80,0,28,'place','#555'],['Vesslan',3400,953,96,0,28,'place','#999'],['Grävlingen',3320,1138,174,0,34,'place','#555'],['Klows väg',2885,1152,118,20],['Krokusvägen',3358,1035,162,23],['Viktoriavägen',3168,895,160,-66],['Näckrosvägen',2815,965,160,-67],['vägen',2650,1170,86,-72],
];
labels.forEach(([t, x, y, len, a, s = 27, c = '', f = '#111']) =>
  out.push(`<text transform="translate(${x} ${y}) rotate(${a})" y="${s / 3}" textLength="${len}" lengthAdjust="spacingAndGlyphs" font-size="${s}" class="${c}" style="fill:${f}">${t}</text>`));
out.push('<text x="1581" y="641" font-size="43" textLength="176" lengthAdjust="spacingAndGlyphs" style="fill:#777">Veberöd</text>');
out.push('<rect x="2095" y="791" width="135" height="56" rx="4" fill="#f1f1d2" stroke="#b5b98b" stroke-width="3"/><text x="2162" y="832" font-size="32" textLength="98" lengthAdjust="spacingAndGlyphs" style="fill:#4d4d1a">102.01</text>');
out.push('<text x="2982" y="658" font-size="46" style="fill:#0092da;font-weight:600">P</text>');
path('M1581,672h18v18h-18zM1815,702h18v18h-18z', '#0092da');

// Observed traffic flow
path('M1326,243L1340,272 1450,400 1572,540M1578,571L1552,620 1508,700 1500,750 1491,822', 'none', '#ff33ee', 17, 'opacity=".87"');
document.getElementById('map').innerHTML = out.join('');
```
